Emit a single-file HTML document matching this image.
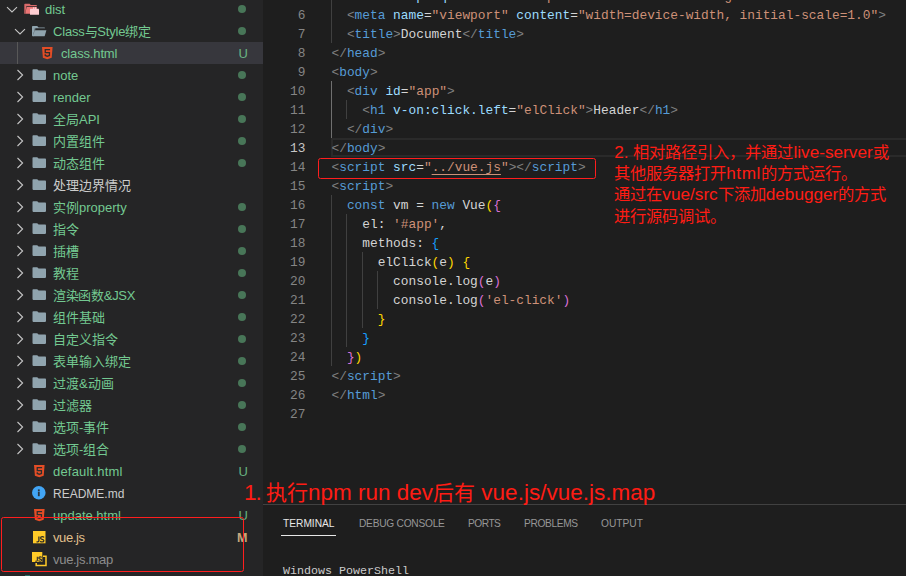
<!DOCTYPE html>
<html lang="zh-CN"><head><meta charset="utf-8">
<style>
*{margin:0;padding:0;box-sizing:border-box}
html,body{width:906px;height:576px;overflow:hidden;background:#1e1e1e}
body{position:relative;font-family:"Liberation Sans",sans-serif}
#side{position:absolute;left:0;top:0;width:263px;height:576px;background:#252526;overflow:hidden}
.row{position:absolute;left:0;width:263px;height:22px}
.row.sel{background:#37373d}
.ic{position:absolute;display:block}
.lbl{position:absolute;top:1px;height:22px;line-height:22px;font-size:13px;white-space:nowrap}
.dot{position:absolute;left:237.8px;top:6.8px;width:8.3px;height:8.3px;border-radius:50%;background:#487658}
.deco{position:absolute;left:232.6px;width:21px;text-align:center;top:1px;line-height:22px;font-size:13px;opacity:.85}
#iguide{position:absolute;left:17px;top:42px;width:1px;height:22px;background:#585858}
#editor{position:absolute;left:263px;top:0;width:643px;height:504px;background:#1e1e1e;overflow:hidden}
.ln{position:absolute;left:0;width:42.5px;text-align:right;height:19px;line-height:19px;font-family:"Liberation Mono",monospace;font-size:12.83px;color:#858585;padding-top:1px}
.ln.act{color:#c6c6c6}
.cl{position:absolute;left:68.5px;height:19px;line-height:19px;font-family:"Liberation Mono",monospace;font-size:12.83px;white-space:pre;color:#d4d4d4;padding-top:0.5px}
.guide{position:absolute;width:1px;background:#404040}
.curline{position:absolute;left:68px;right:0;height:19px;border:2px solid #2a2a2a;border-right:none}
.tg{color:#569cd6}.pu{color:#808080}.at{color:#9cdcfe}.st{color:#ce9178}.tx{color:#d4d4d4}.kw{color:#569cd6}
.b1{color:#ffd700}.b2{color:#da70d6}.b3{color:#179fff}
.ul{text-decoration:underline;text-underline-offset:3px}
#panel{position:absolute;left:263px;top:504px;width:643px;height:72px;background:#1e1e1e;border-top:1px solid #414141}
.tab{position:absolute;top:12px;font-size:10.2px;line-height:14px;color:#969696;white-space:nowrap}
.tab.act{color:#e7e7e7}
#tabul{position:absolute;left:17.5px;top:30px;width:55px;height:1px;background:#e7e7e7}
#term{position:absolute;left:20px;top:59px;font-family:"Liberation Mono",monospace;font-size:11.67px;color:#cccccc;white-space:pre}
.red{position:absolute;color:#ff1c14;white-space:nowrap}
.l1{font-size:22.5px}.l2{font-size:17.2px}
.rbox{position:absolute;border:1.4px solid #ff1e1e;border-radius:2.5px}
</style></head><body>
<div id="side">
<div class="row" style="top:-2px"><svg class="ic" style="left:6px;top:8px" width="12" height="8" viewBox="0 0 12 8"><path d="M1 1.2 L6 6 L11 1.2" fill="none" stroke="#c5c5c5" stroke-width="1.1"/></svg><svg class="ic" style="left:24px;top:5px" width="16" height="13" viewBox="0 0 16 13"><path d="M0.3 1.6 Q0.3 0.8 1.1 0.8 L5.6 0.8 L6.8 2.1 L12.3 2.1 Q12.9 2.1 12.9 2.7 L12.9 3.3 L2.3 3.3 L1.3 10.8 L0.3 10.8 Z" fill="#d96a6a"/><path d="M2.6 3.9 L12.9 3.9 L12.9 10.8 L1.3 10.8 Z" fill="#ec7676"/><rect x="6" y="5.8" width="9" height="6" rx="0.4" fill="#ffcdd2"/><rect x="9.1" y="4.2" width="1.3" height="2" fill="#ffcdd2"/><rect x="11" y="4.2" width="1.2" height="2" fill="#ffcdd2"/></svg><span class="lbl" style="left:45px;color:#73c991;">dist</span><span class="dot"></span></div>
<div class="row" style="top:20px"><svg class="ic" style="left:14px;top:8px" width="12" height="8" viewBox="0 0 12 8"><path d="M1 1.2 L6 6 L11 1.2" fill="none" stroke="#c5c5c5" stroke-width="1.1"/></svg><svg class="ic" style="left:32px;top:5.6px" width="16" height="12" viewBox="0 0 16 12"><path d="M0 0.8 Q0 0 0.8 0 H5.2 L6.6 1.4 H12.3 Q13 1.4 13 2.1 V2.3 H2.9 L0.9 10.3 H0.7 Q0 10.3 0 9.6 Z" fill="#90a4ae"/><path d="M2.9 2.3 H3.6 L1.5 10.3 H0.9 Z" fill="#7d8e96"/><path d="M2.9 4.2 H14.4 L12.8 9.7 Q12.6 10.3 12 10.3 H0.7 Z" fill="#90a4ae"/></svg><span class="lbl" style="left:53px;color:#73c991;letter-spacing:-0.2px;">Class与Style绑定</span><span class="dot"></span></div>
<div class="row sel" style="top:42px"><svg class="ic" style="left:41.5px;top:4.8px" width="11" height="13" viewBox="0 0 11 13"><path d="M0 0 L10.6 0 L9.7 10.8 L5.3 12.2 L0.9 10.8 Z" fill="#e44d26"/><path d="M2.6 2 H8.1 V3.3 H3.9 V4.9 H8.1 V8.9 L5.3 9.9 L2.6 8.9 V7.2 H3.9 V8 L5.3 8.5 L6.8 8 V6.2 H2.6 Z" fill="#2d2d2d"/></svg><span class="lbl" style="left:61px;color:#73c991;letter-spacing:-0.15px;">class.html</span><span class="deco" style="color:#73c991">U</span></div>
<div class="row" style="top:64px"><svg class="ic" style="left:15.8px;top:5px" width="8" height="12" viewBox="0 0 8 12"><path d="M1.5 1 L6.6 6 L1.5 11" fill="none" stroke="#c5c5c5" stroke-width="1.1"/></svg><svg class="ic" style="left:31.6px;top:5.3px" width="15" height="12" viewBox="0 0 15 12"><path d="M0.5 1.1 Q0.5 0.3 1.3 0.3 L5.2 0.3 L6.6 1.6 L13.2 1.6 Q14 1.6 14 2.4 L14 10.1 Q14 10.9 13.2 10.9 L1.3 10.9 Q0.5 10.9 0.5 10.1 Z" fill="#90a4ae"/></svg><span class="lbl" style="left:53px;color:#73c991;">note</span><span class="dot"></span></div>
<div class="row" style="top:86px"><svg class="ic" style="left:15.8px;top:5px" width="8" height="12" viewBox="0 0 8 12"><path d="M1.5 1 L6.6 6 L1.5 11" fill="none" stroke="#c5c5c5" stroke-width="1.1"/></svg><svg class="ic" style="left:31.6px;top:5.3px" width="15" height="12" viewBox="0 0 15 12"><path d="M0.5 1.1 Q0.5 0.3 1.3 0.3 L5.2 0.3 L6.6 1.6 L13.2 1.6 Q14 1.6 14 2.4 L14 10.1 Q14 10.9 13.2 10.9 L1.3 10.9 Q0.5 10.9 0.5 10.1 Z" fill="#90a4ae"/></svg><span class="lbl" style="left:53px;color:#73c991;">render</span><span class="dot"></span></div>
<div class="row" style="top:108px"><svg class="ic" style="left:15.8px;top:5px" width="8" height="12" viewBox="0 0 8 12"><path d="M1.5 1 L6.6 6 L1.5 11" fill="none" stroke="#c5c5c5" stroke-width="1.1"/></svg><svg class="ic" style="left:31.6px;top:5.3px" width="15" height="12" viewBox="0 0 15 12"><path d="M0.5 1.1 Q0.5 0.3 1.3 0.3 L5.2 0.3 L6.6 1.6 L13.2 1.6 Q14 1.6 14 2.4 L14 10.1 Q14 10.9 13.2 10.9 L1.3 10.9 Q0.5 10.9 0.5 10.1 Z" fill="#90a4ae"/></svg><span class="lbl" style="left:53px;color:#73c991;">全局API</span><span class="dot"></span></div>
<div class="row" style="top:130px"><svg class="ic" style="left:15.8px;top:5px" width="8" height="12" viewBox="0 0 8 12"><path d="M1.5 1 L6.6 6 L1.5 11" fill="none" stroke="#c5c5c5" stroke-width="1.1"/></svg><svg class="ic" style="left:31.6px;top:5.3px" width="15" height="12" viewBox="0 0 15 12"><path d="M0.5 1.1 Q0.5 0.3 1.3 0.3 L5.2 0.3 L6.6 1.6 L13.2 1.6 Q14 1.6 14 2.4 L14 10.1 Q14 10.9 13.2 10.9 L1.3 10.9 Q0.5 10.9 0.5 10.1 Z" fill="#90a4ae"/></svg><span class="lbl" style="left:53px;color:#73c991;">内置组件</span><span class="dot"></span></div>
<div class="row" style="top:152px"><svg class="ic" style="left:15.8px;top:5px" width="8" height="12" viewBox="0 0 8 12"><path d="M1.5 1 L6.6 6 L1.5 11" fill="none" stroke="#c5c5c5" stroke-width="1.1"/></svg><svg class="ic" style="left:31.6px;top:5.3px" width="15" height="12" viewBox="0 0 15 12"><path d="M0.5 1.1 Q0.5 0.3 1.3 0.3 L5.2 0.3 L6.6 1.6 L13.2 1.6 Q14 1.6 14 2.4 L14 10.1 Q14 10.9 13.2 10.9 L1.3 10.9 Q0.5 10.9 0.5 10.1 Z" fill="#90a4ae"/></svg><span class="lbl" style="left:53px;color:#73c991;">动态组件</span><span class="dot"></span></div>
<div class="row" style="top:174px"><svg class="ic" style="left:15.8px;top:5px" width="8" height="12" viewBox="0 0 8 12"><path d="M1.5 1 L6.6 6 L1.5 11" fill="none" stroke="#c5c5c5" stroke-width="1.1"/></svg><svg class="ic" style="left:31.6px;top:5.3px" width="15" height="12" viewBox="0 0 15 12"><path d="M0.5 1.1 Q0.5 0.3 1.3 0.3 L5.2 0.3 L6.6 1.6 L13.2 1.6 Q14 1.6 14 2.4 L14 10.1 Q14 10.9 13.2 10.9 L1.3 10.9 Q0.5 10.9 0.5 10.1 Z" fill="#90a4ae"/></svg><span class="lbl" style="left:53px;color:#cccccc;">处理边界情况</span></div>
<div class="row" style="top:196px"><svg class="ic" style="left:15.8px;top:5px" width="8" height="12" viewBox="0 0 8 12"><path d="M1.5 1 L6.6 6 L1.5 11" fill="none" stroke="#c5c5c5" stroke-width="1.1"/></svg><svg class="ic" style="left:31.6px;top:5.3px" width="15" height="12" viewBox="0 0 15 12"><path d="M0.5 1.1 Q0.5 0.3 1.3 0.3 L5.2 0.3 L6.6 1.6 L13.2 1.6 Q14 1.6 14 2.4 L14 10.1 Q14 10.9 13.2 10.9 L1.3 10.9 Q0.5 10.9 0.5 10.1 Z" fill="#90a4ae"/></svg><span class="lbl" style="left:53px;color:#73c991;">实例property</span><span class="dot"></span></div>
<div class="row" style="top:218px"><svg class="ic" style="left:15.8px;top:5px" width="8" height="12" viewBox="0 0 8 12"><path d="M1.5 1 L6.6 6 L1.5 11" fill="none" stroke="#c5c5c5" stroke-width="1.1"/></svg><svg class="ic" style="left:31.6px;top:5.3px" width="15" height="12" viewBox="0 0 15 12"><path d="M0.5 1.1 Q0.5 0.3 1.3 0.3 L5.2 0.3 L6.6 1.6 L13.2 1.6 Q14 1.6 14 2.4 L14 10.1 Q14 10.9 13.2 10.9 L1.3 10.9 Q0.5 10.9 0.5 10.1 Z" fill="#90a4ae"/></svg><span class="lbl" style="left:53px;color:#73c991;">指令</span><span class="dot"></span></div>
<div class="row" style="top:240px"><svg class="ic" style="left:15.8px;top:5px" width="8" height="12" viewBox="0 0 8 12"><path d="M1.5 1 L6.6 6 L1.5 11" fill="none" stroke="#c5c5c5" stroke-width="1.1"/></svg><svg class="ic" style="left:31.6px;top:5.3px" width="15" height="12" viewBox="0 0 15 12"><path d="M0.5 1.1 Q0.5 0.3 1.3 0.3 L5.2 0.3 L6.6 1.6 L13.2 1.6 Q14 1.6 14 2.4 L14 10.1 Q14 10.9 13.2 10.9 L1.3 10.9 Q0.5 10.9 0.5 10.1 Z" fill="#90a4ae"/></svg><span class="lbl" style="left:53px;color:#73c991;">插槽</span><span class="dot"></span></div>
<div class="row" style="top:262px"><svg class="ic" style="left:15.8px;top:5px" width="8" height="12" viewBox="0 0 8 12"><path d="M1.5 1 L6.6 6 L1.5 11" fill="none" stroke="#c5c5c5" stroke-width="1.1"/></svg><svg class="ic" style="left:31.6px;top:5.3px" width="15" height="12" viewBox="0 0 15 12"><path d="M0.5 1.1 Q0.5 0.3 1.3 0.3 L5.2 0.3 L6.6 1.6 L13.2 1.6 Q14 1.6 14 2.4 L14 10.1 Q14 10.9 13.2 10.9 L1.3 10.9 Q0.5 10.9 0.5 10.1 Z" fill="#90a4ae"/></svg><span class="lbl" style="left:53px;color:#73c991;">教程</span><span class="dot"></span></div>
<div class="row" style="top:284px"><svg class="ic" style="left:15.8px;top:5px" width="8" height="12" viewBox="0 0 8 12"><path d="M1.5 1 L6.6 6 L1.5 11" fill="none" stroke="#c5c5c5" stroke-width="1.1"/></svg><svg class="ic" style="left:31.6px;top:5.3px" width="15" height="12" viewBox="0 0 15 12"><path d="M0.5 1.1 Q0.5 0.3 1.3 0.3 L5.2 0.3 L6.6 1.6 L13.2 1.6 Q14 1.6 14 2.4 L14 10.1 Q14 10.9 13.2 10.9 L1.3 10.9 Q0.5 10.9 0.5 10.1 Z" fill="#90a4ae"/></svg><span class="lbl" style="left:53px;color:#73c991;letter-spacing:-0.3px;">渲染函数&amp;JSX</span><span class="dot"></span></div>
<div class="row" style="top:306px"><svg class="ic" style="left:15.8px;top:5px" width="8" height="12" viewBox="0 0 8 12"><path d="M1.5 1 L6.6 6 L1.5 11" fill="none" stroke="#c5c5c5" stroke-width="1.1"/></svg><svg class="ic" style="left:31.6px;top:5.3px" width="15" height="12" viewBox="0 0 15 12"><path d="M0.5 1.1 Q0.5 0.3 1.3 0.3 L5.2 0.3 L6.6 1.6 L13.2 1.6 Q14 1.6 14 2.4 L14 10.1 Q14 10.9 13.2 10.9 L1.3 10.9 Q0.5 10.9 0.5 10.1 Z" fill="#90a4ae"/></svg><span class="lbl" style="left:53px;color:#73c991;">组件基础</span><span class="dot"></span></div>
<div class="row" style="top:328px"><svg class="ic" style="left:15.8px;top:5px" width="8" height="12" viewBox="0 0 8 12"><path d="M1.5 1 L6.6 6 L1.5 11" fill="none" stroke="#c5c5c5" stroke-width="1.1"/></svg><svg class="ic" style="left:31.6px;top:5.3px" width="15" height="12" viewBox="0 0 15 12"><path d="M0.5 1.1 Q0.5 0.3 1.3 0.3 L5.2 0.3 L6.6 1.6 L13.2 1.6 Q14 1.6 14 2.4 L14 10.1 Q14 10.9 13.2 10.9 L1.3 10.9 Q0.5 10.9 0.5 10.1 Z" fill="#90a4ae"/></svg><span class="lbl" style="left:53px;color:#73c991;">自定义指令</span><span class="dot"></span></div>
<div class="row" style="top:350px"><svg class="ic" style="left:15.8px;top:5px" width="8" height="12" viewBox="0 0 8 12"><path d="M1.5 1 L6.6 6 L1.5 11" fill="none" stroke="#c5c5c5" stroke-width="1.1"/></svg><svg class="ic" style="left:31.6px;top:5.3px" width="15" height="12" viewBox="0 0 15 12"><path d="M0.5 1.1 Q0.5 0.3 1.3 0.3 L5.2 0.3 L6.6 1.6 L13.2 1.6 Q14 1.6 14 2.4 L14 10.1 Q14 10.9 13.2 10.9 L1.3 10.9 Q0.5 10.9 0.5 10.1 Z" fill="#90a4ae"/></svg><span class="lbl" style="left:53px;color:#73c991;">表单输入绑定</span><span class="dot"></span></div>
<div class="row" style="top:372px"><svg class="ic" style="left:15.8px;top:5px" width="8" height="12" viewBox="0 0 8 12"><path d="M1.5 1 L6.6 6 L1.5 11" fill="none" stroke="#c5c5c5" stroke-width="1.1"/></svg><svg class="ic" style="left:31.6px;top:5.3px" width="15" height="12" viewBox="0 0 15 12"><path d="M0.5 1.1 Q0.5 0.3 1.3 0.3 L5.2 0.3 L6.6 1.6 L13.2 1.6 Q14 1.6 14 2.4 L14 10.1 Q14 10.9 13.2 10.9 L1.3 10.9 Q0.5 10.9 0.5 10.1 Z" fill="#90a4ae"/></svg><span class="lbl" style="left:53px;color:#73c991;">过渡&amp;动画</span><span class="dot"></span></div>
<div class="row" style="top:394px"><svg class="ic" style="left:15.8px;top:5px" width="8" height="12" viewBox="0 0 8 12"><path d="M1.5 1 L6.6 6 L1.5 11" fill="none" stroke="#c5c5c5" stroke-width="1.1"/></svg><svg class="ic" style="left:31.6px;top:5.3px" width="15" height="12" viewBox="0 0 15 12"><path d="M0.5 1.1 Q0.5 0.3 1.3 0.3 L5.2 0.3 L6.6 1.6 L13.2 1.6 Q14 1.6 14 2.4 L14 10.1 Q14 10.9 13.2 10.9 L1.3 10.9 Q0.5 10.9 0.5 10.1 Z" fill="#90a4ae"/></svg><span class="lbl" style="left:53px;color:#73c991;">过滤器</span><span class="dot"></span></div>
<div class="row" style="top:416px"><svg class="ic" style="left:15.8px;top:5px" width="8" height="12" viewBox="0 0 8 12"><path d="M1.5 1 L6.6 6 L1.5 11" fill="none" stroke="#c5c5c5" stroke-width="1.1"/></svg><svg class="ic" style="left:31.6px;top:5.3px" width="15" height="12" viewBox="0 0 15 12"><path d="M0.5 1.1 Q0.5 0.3 1.3 0.3 L5.2 0.3 L6.6 1.6 L13.2 1.6 Q14 1.6 14 2.4 L14 10.1 Q14 10.9 13.2 10.9 L1.3 10.9 Q0.5 10.9 0.5 10.1 Z" fill="#90a4ae"/></svg><span class="lbl" style="left:53px;color:#73c991;">选项-事件</span><span class="dot"></span></div>
<div class="row" style="top:438px"><svg class="ic" style="left:15.8px;top:5px" width="8" height="12" viewBox="0 0 8 12"><path d="M1.5 1 L6.6 6 L1.5 11" fill="none" stroke="#c5c5c5" stroke-width="1.1"/></svg><svg class="ic" style="left:31.6px;top:5.3px" width="15" height="12" viewBox="0 0 15 12"><path d="M0.5 1.1 Q0.5 0.3 1.3 0.3 L5.2 0.3 L6.6 1.6 L13.2 1.6 Q14 1.6 14 2.4 L14 10.1 Q14 10.9 13.2 10.9 L1.3 10.9 Q0.5 10.9 0.5 10.1 Z" fill="#90a4ae"/></svg><span class="lbl" style="left:53px;color:#73c991;">选项-组合</span><span class="dot"></span></div>
<div class="row" style="top:460px"><svg class="ic" style="left:33.5px;top:4.8px" width="11" height="13" viewBox="0 0 11 13"><path d="M0 0 L10.6 0 L9.7 10.8 L5.3 12.2 L0.9 10.8 Z" fill="#e44d26"/><path d="M2.6 2 H8.1 V3.3 H3.9 V4.9 H8.1 V8.9 L5.3 9.9 L2.6 8.9 V7.2 H3.9 V8 L5.3 8.5 L6.8 8 V6.2 H2.6 Z" fill="#2d2d2d"/></svg><span class="lbl" style="left:53px;color:#73c991;letter-spacing:0.2px;">default.html</span><span class="deco" style="color:#73c991">U</span></div>
<div class="row" style="top:482px"><svg class="ic" style="left:32.2px;top:4px" width="14" height="14" viewBox="0 0 14 14"><circle cx="6.8" cy="6.8" r="6.8" fill="#42a5f5"/><rect x="5.9" y="5.6" width="1.8" height="4.6" fill="#2a3540"/><rect x="5.9" y="3.4" width="1.8" height="1.6" fill="#2a3540"/></svg><span class="lbl" style="left:53px;color:#cccccc;font-size:12px;">README.md</span></div>
<div class="row" style="top:504px"><svg class="ic" style="left:33.5px;top:4.8px" width="11" height="13" viewBox="0 0 11 13"><path d="M0 0 L10.6 0 L9.7 10.8 L5.3 12.2 L0.9 10.8 Z" fill="#e44d26"/><path d="M2.6 2 H8.1 V3.3 H3.9 V4.9 H8.1 V8.9 L5.3 9.9 L2.6 8.9 V7.2 H3.9 V8 L5.3 8.5 L6.8 8 V6.2 H2.6 Z" fill="#2d2d2d"/></svg><span class="lbl" style="left:53px;color:#73c991;">update.html</span><span class="deco" style="color:#73c991">U</span></div>
<div class="row" style="top:526px"><svg class="ic" style="left:32.8px;top:4.8px" width="13" height="13" viewBox="0 0 13 13"><rect x="0" y="0" width="12.5" height="12.3" fill="#ffca28"/><path d="M5.9 5.6 V9.8 Q5.9 10.9 4.8 10.9 H3.5 M11.1 6.4 Q10.4 5.7 9.2 5.7 Q7.6 5.7 7.6 7.1 Q7.6 8.1 9.2 8.35 Q10.9 8.6 10.9 9.7 Q10.9 10.95 9.2 10.95 Q7.9 10.95 7.2 10.2" fill="none" stroke="#2a2a2a" stroke-width="1.25"/></svg><span class="lbl" style="left:53px;color:#e2c08d;letter-spacing:-0.4px;">vue.js</span><span class="deco" style="color:#e2c08d;font-weight:bold;font-size:12.5px;left:231.8px">M</span></div>
<div class="row" style="top:548px"><svg class="ic" style="left:32px;top:4px" width="15" height="15" viewBox="0 0 15 15"><path d="M11 4.3 L14 4.3 L14 13.6 L4.2 13.6 L4.2 11" fill="none" stroke="#ffca28" stroke-width="1.5"/><rect x="0" y="0" width="10.3" height="10" fill="#ffca28"/><g transform="translate(0.3,0) scale(0.85)"><path d="M5.9 5.6 V9.8 Q5.9 10.9 4.8 10.9 H3.5 M11.1 6.4 Q10.4 5.7 9.2 5.7 Q7.6 5.7 7.6 7.1 Q7.6 8.1 9.2 8.35 Q10.9 8.6 10.9 9.7 Q10.9 10.95 9.2 10.95 Q7.9 10.95 7.2 10.2" fill="none" stroke="#2a2a2a" stroke-width="1.3"/></g></svg><span class="lbl" style="left:53px;color:#8c8c8c;letter-spacing:-0.3px;">vue.js.map</span></div>
<div id="iguide"></div>
</div>
<div id="editor">
<div class="curline" style="top:138px"></div>
<div class="guide" style="left:68px;top:-14px;height:57px;background:#404040"></div>
<div class="guide" style="left:68px;top:81px;height:57px;background:#707070"></div>
<div class="guide" style="left:83px;top:100px;height:19px;background:#404040"></div>
<div class="guide" style="left:68px;top:195px;height:171px;background:#404040"></div>
<div class="guide" style="left:83px;top:214px;height:133px;background:#404040"></div>
<div class="guide" style="left:99px;top:252px;height:76px;background:#404040"></div>
<div class="guide" style="left:114px;top:271px;height:38px;background:#404040"></div>
<div class="ln" style="top:-14px">5</div>
<div class="ln" style="top:5px">6</div>
<div class="ln" style="top:24px">7</div>
<div class="ln" style="top:43px">8</div>
<div class="ln" style="top:62px">9</div>
<div class="ln" style="top:81px">10</div>
<div class="ln" style="top:100px">11</div>
<div class="ln" style="top:119px">12</div>
<div class="ln act" style="top:138px">13</div>
<div class="ln" style="top:157px">14</div>
<div class="ln" style="top:176px">15</div>
<div class="ln" style="top:195px">16</div>
<div class="ln" style="top:214px">17</div>
<div class="ln" style="top:233px">18</div>
<div class="ln" style="top:252px">19</div>
<div class="ln" style="top:271px">20</div>
<div class="ln" style="top:290px">21</div>
<div class="ln" style="top:309px">22</div>
<div class="ln" style="top:328px">23</div>
<div class="ln" style="top:347px">24</div>
<div class="ln" style="top:366px">25</div>
<div class="ln" style="top:385px">26</div>
<div class="ln" style="top:404px">27</div>
<div class="cl" style="top:-14px">  <span class="pu">&lt;</span><span class="tg">meta</span> <span class="at">http-equiv</span><span class="tx">=</span><span class="st">&quot;X-UA-Compatible&quot;</span> <span class="at">content</span><span class="tx">=</span><span class="st">&quot;IE=edge&quot;</span><span class="pu">&gt;</span></div>
<div class="cl" style="top:5px">  <span class="pu">&lt;</span><span class="tg">meta</span> <span class="at">name</span><span class="tx">=</span><span class="st">&quot;viewport&quot;</span> <span class="at">content</span><span class="tx">=</span><span class="st">&quot;width=device-width, initial-scale=1.0&quot;</span><span class="pu">&gt;</span></div>
<div class="cl" style="top:24px">  <span class="pu">&lt;</span><span class="tg">title</span><span class="pu">&gt;</span><span class="tx">Document</span><span class="pu">&lt;/</span><span class="tg">title</span><span class="pu">&gt;</span></div>
<div class="cl" style="top:43px"><span class="pu">&lt;/</span><span class="tg">head</span><span class="pu">&gt;</span></div>
<div class="cl" style="top:62px"><span class="pu">&lt;</span><span class="tg">body</span><span class="pu">&gt;</span></div>
<div class="cl" style="top:81px">  <span class="pu">&lt;</span><span class="tg">div</span> <span class="at">id</span><span class="tx">=</span><span class="st">&quot;app&quot;</span><span class="pu">&gt;</span></div>
<div class="cl" style="top:100px">    <span class="pu">&lt;</span><span class="tg">h1</span> <span class="at">v-on:click.left</span><span class="tx">=</span><span class="st">&quot;elClick&quot;</span><span class="pu">&gt;</span><span class="tx">Header</span><span class="pu">&lt;/</span><span class="tg">h1</span><span class="pu">&gt;</span></div>
<div class="cl" style="top:119px">  <span class="pu">&lt;/</span><span class="tg">div</span><span class="pu">&gt;</span></div>
<div class="cl" style="top:138px"><span class="pu">&lt;/</span><span class="tg">body</span><span class="pu">&gt;</span></div>
<div class="cl" style="top:157px"><span class="pu">&lt;</span><span class="tg">script</span> <span class="at">src</span><span class="tx">=</span><span class="st">&quot;</span><span class="st ul">../vue.js</span><span class="st">&quot;</span><span class="pu">&gt;&lt;/</span><span class="tg">script</span><span class="pu">&gt;</span></div>
<div class="cl" style="top:176px"><span class="pu">&lt;</span><span class="tg">script</span><span class="pu">&gt;</span></div>
<div class="cl" style="top:195px">  <span class="kw">const</span><span class="tx"> vm = </span><span class="kw">new</span><span class="tx"> Vue</span><span class="b1">(</span><span class="b2">{</span></div>
<div class="cl" style="top:214px">    <span class="tx">el: </span><span class="st">&#x27;#app&#x27;</span><span class="tx">,</span></div>
<div class="cl" style="top:233px">    <span class="tx">methods: </span><span class="b3">{</span></div>
<div class="cl" style="top:252px">      <span class="tx">elClick</span><span class="b1">(</span><span class="tx">e</span><span class="b1">)</span><span class="tx"> </span><span class="b1">{</span></div>
<div class="cl" style="top:271px">        <span class="tx">console.log</span><span class="b2">(</span><span class="tx">e</span><span class="b2">)</span></div>
<div class="cl" style="top:290px">        <span class="tx">console.log</span><span class="b2">(</span><span class="st">&#x27;el-click&#x27;</span><span class="b2">)</span></div>
<div class="cl" style="top:309px">      <span class="b1">}</span></div>
<div class="cl" style="top:328px">    <span class="b3">}</span></div>
<div class="cl" style="top:347px">  <span class="b2">}</span><span class="b1">)</span></div>
<div class="cl" style="top:366px"><span class="pu">&lt;/</span><span class="tg">script</span><span class="pu">&gt;</span></div>
<div class="cl" style="top:385px"><span class="pu">&lt;/</span><span class="tg">html</span><span class="pu">&gt;</span></div>
<div class="cl" style="top:404px"></div>
</div>
<div id="panel">
<div class="tab act" style="left:20px">TERMINAL</div>
<div class="tab" style="left:96px;letter-spacing:-0.25px">DEBUG CONSOLE</div>
<div class="tab" style="left:205px;letter-spacing:-0.5px">PORTS</div>
<div class="tab" style="left:261px;letter-spacing:-0.35px">PROBLEMS</div>
<div class="tab" style="left:338px">OUTPUT</div>
<div id="tabul"></div>
<div id="term">Windows PowerShell</div>
</div>
<div class="rbox" style="left:318px;top:158px;width:278px;height:21px"></div>
<div class="rbox" style="left:1px;top:517px;width:243px;height:55px"></div>
<div class="red" id="r2" style="left:614.3px;top:141.6px;font-size:16.3px;line-height:21.35px"><span class="l2">2. </span>相对路径引入，并通过<span class="l2">live-server</span>或<br>其他服务器打开<span class="l2" style="letter-spacing:0.5px">html</span>的方式运行。<br>通过在<span class="l2">vue/src</span>下添加<span class="l2">debugger</span>的方式<br>进行源码调试。</div>
<div class="red" id="r1" style="left:244px;top:480px;font-size:21px;line-height:26px"><span class="l1" style="letter-spacing:-1px">1. </span>执行<span class="l1">npm run dev</span>后有<span class="l1"> vue.js/vue.js.map</span></div>
<div style="position:absolute;left:25px;top:575px;width:5px;height:1px;background:#2a6a64"></div>
</body></html>
